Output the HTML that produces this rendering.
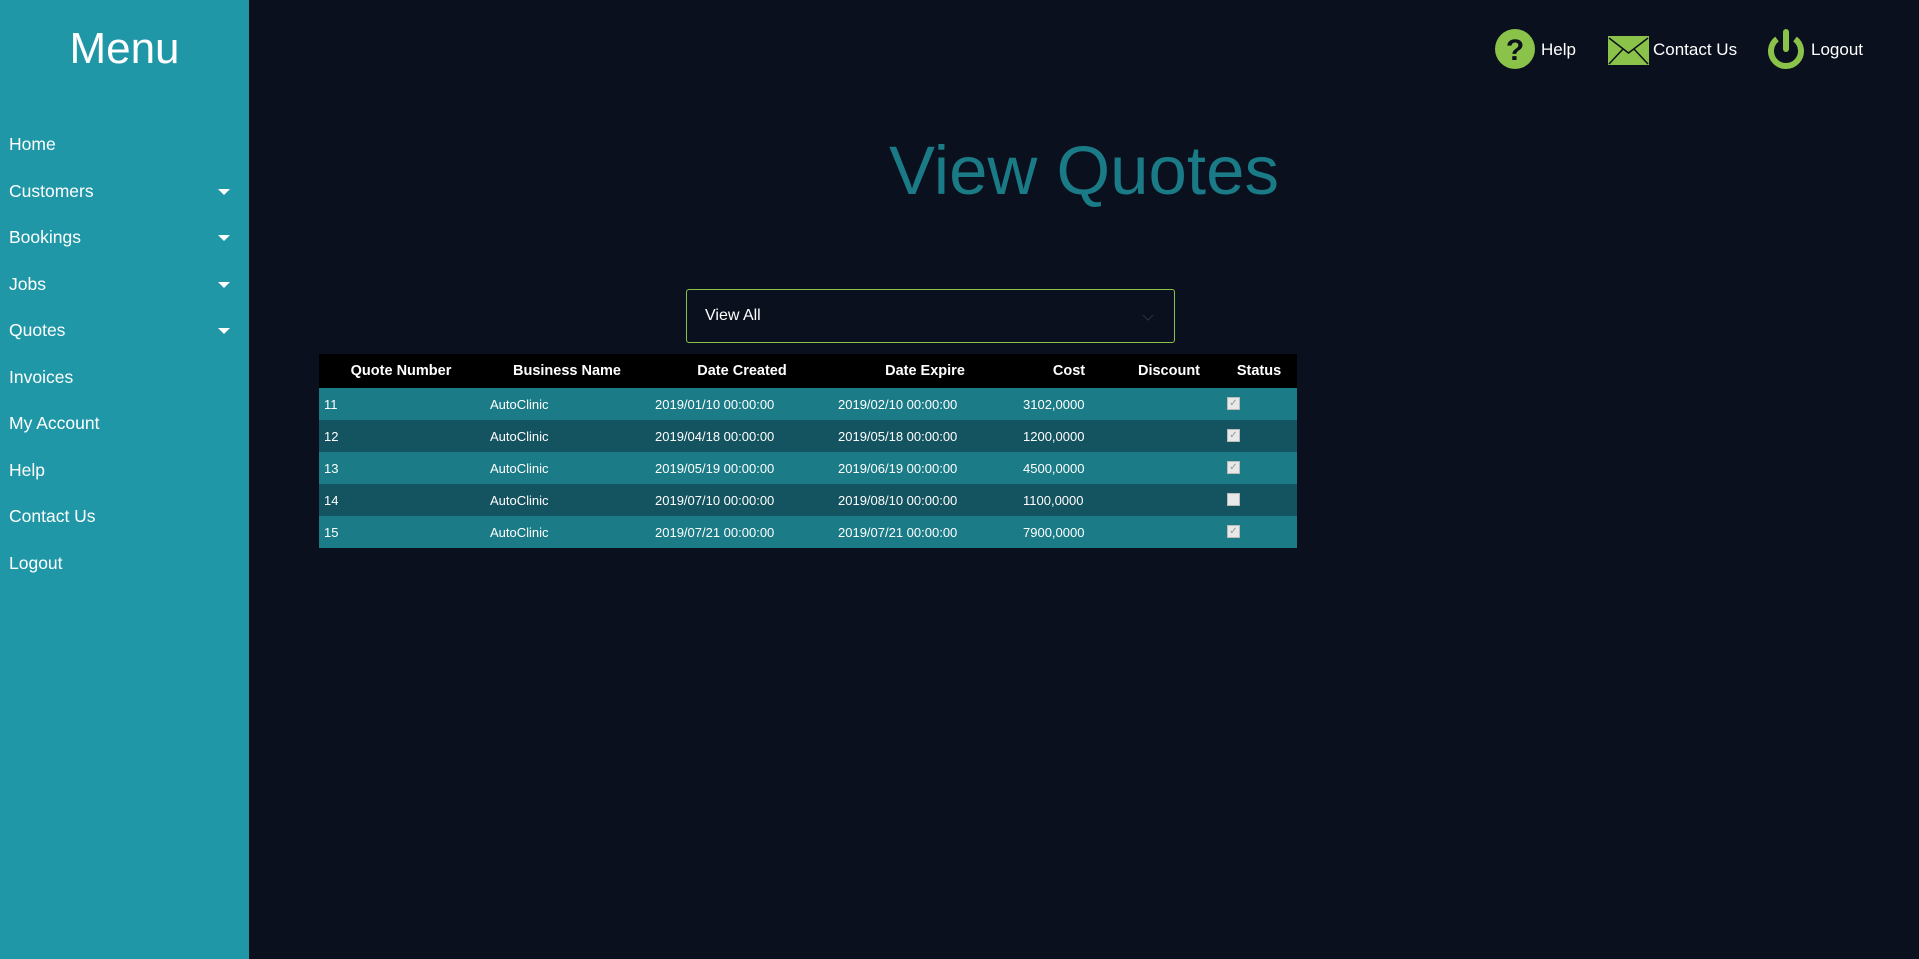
<!DOCTYPE html>
<html><head><meta charset="utf-8"><style>
*{margin:0;padding:0;box-sizing:border-box}
body{width:1919px;height:959px;background:#0a101d;font-family:"Liberation Sans",sans-serif;color:#fff;position:relative;overflow:hidden}
.sb{position:absolute;left:0;top:0;width:249px;height:959px;background:#1f97a7}
.sb h1{position:absolute;left:0;width:249px;top:24px;text-align:center;font-weight:normal;font-size:44px}
.nav{position:absolute;left:9px;font-size:17.5px}
.arr{position:absolute;left:218px;width:0;height:0;border-left:6px solid transparent;border-right:6px solid transparent;border-top:6px solid #fff}
.t{position:absolute;font-size:17px}
.title{position:absolute;left:889px;top:131px;font-size:69px;color:#1a7a86}
.dd{position:absolute;left:686px;top:289px;width:489px;height:54px;border:1px solid #8bc34a;border-radius:3px}
.dd span{position:absolute;left:18px;top:17px;font-size:16px}
.dd svg{position:absolute;right:20px;top:24px}
.row{position:absolute;left:319px;width:978px;height:32px;font-size:13px}
.row div{position:absolute;top:9px;white-space:nowrap}
.h div{font-weight:bold;font-size:14.5px;transform:translateX(-50%);top:9px}
.cb{width:13px;height:13px;background:#e8e8e8;border:1px solid #bbb;top:9px!important;font-size:10px;color:#999;line-height:11px;text-align:center}
</style></head><body>
<div class="sb"><h1>Menu</h1>
<div class="nav" style="top:134px">Home</div>
<div class="nav" style="top:181px">Customers</div><div class="arr" style="top:189px"></div>
<div class="nav" style="top:227px">Bookings</div><div class="arr" style="top:235px"></div>
<div class="nav" style="top:274px">Jobs</div><div class="arr" style="top:282px"></div>
<div class="nav" style="top:320px">Quotes</div><div class="arr" style="top:328px"></div>
<div class="nav" style="top:367px">Invoices</div>
<div class="nav" style="top:413px">My Account</div>
<div class="nav" style="top:460px">Help</div>
<div class="nav" style="top:506px">Contact Us</div>
<div class="nav" style="top:553px">Logout</div>
</div>
<svg style="position:absolute;left:1495px;top:29px" width="40" height="40"><circle cx="20" cy="20" r="20" fill="#8bc34a"/><text x="20" y="31" text-anchor="middle" font-family="Liberation Sans" font-weight="bold" font-size="30" fill="#0a101d">?</text></svg>
<div class="t" style="left:1541px;top:40px">Help</div>
<svg style="position:absolute;left:1608px;top:36px" width="41" height="29"><rect x="0" y="0" width="41" height="29" fill="#8bc34a"/><path d="M1 2 L20.5 17 L40 2 M1 28 L15 13 M40 28 L26 13" stroke="#0a101d" stroke-width="1.5" fill="none"/></svg>
<div class="t" style="left:1653px;top:40px">Contact Us</div>
<svg style="position:absolute;left:1766px;top:29px" width="40" height="42"><path d="M11 10 A15 15 0 1 0 29 10" stroke="#8bc34a" stroke-width="6" fill="none"/><line x1="20" y1="3" x2="20" y2="20" stroke="#8bc34a" stroke-width="6" stroke-linecap="round"/></svg>
<div class="t" style="left:1811px;top:40px">Logout</div>
<div class="title">View Quotes</div>
<div class="dd"><span>View All</span><svg width="12" height="7"><path d="M1 1 L6 6 L11 1" stroke="#2a3340" fill="none"/></svg></div>
<div class="row h" style="top:354px;height:34px;background:#000">
<div style="left:82px">Quote Number</div><div style="left:248px">Business Name</div><div style="left:423px">Date Created</div><div style="left:606px">Date Expire</div><div style="left:750px">Cost</div><div style="left:850px">Discount</div><div style="left:940px">Status</div></div>
<div class="row" style="top:388px;background:#1b7b87"><div style="left:5px">11</div><div style="left:171px">AutoClinic</div><div style="left:336px">2019/01/10 00:00:00</div><div style="left:519px">2019/02/10 00:00:00</div><div style="left:704px">3102,0000</div><div class="cb" style="left:908px">✓</div></div>
<div class="row" style="top:420px;background:#145360"><div style="left:5px">12</div><div style="left:171px">AutoClinic</div><div style="left:336px">2019/04/18 00:00:00</div><div style="left:519px">2019/05/18 00:00:00</div><div style="left:704px">1200,0000</div><div class="cb" style="left:908px">✓</div></div>
<div class="row" style="top:452px;background:#1b7b87"><div style="left:5px">13</div><div style="left:171px">AutoClinic</div><div style="left:336px">2019/05/19 00:00:00</div><div style="left:519px">2019/06/19 00:00:00</div><div style="left:704px">4500,0000</div><div class="cb" style="left:908px">✓</div></div>
<div class="row" style="top:484px;background:#145360"><div style="left:5px">14</div><div style="left:171px">AutoClinic</div><div style="left:336px">2019/07/10 00:00:00</div><div style="left:519px">2019/08/10 00:00:00</div><div style="left:704px">1100,0000</div><div class="cb" style="left:908px"></div></div>
<div class="row" style="top:516px;background:#1b7b87"><div style="left:5px">15</div><div style="left:171px">AutoClinic</div><div style="left:336px">2019/07/21 00:00:00</div><div style="left:519px">2019/07/21 00:00:00</div><div style="left:704px">7900,0000</div><div class="cb" style="left:908px">✓</div></div>
</body></html>
